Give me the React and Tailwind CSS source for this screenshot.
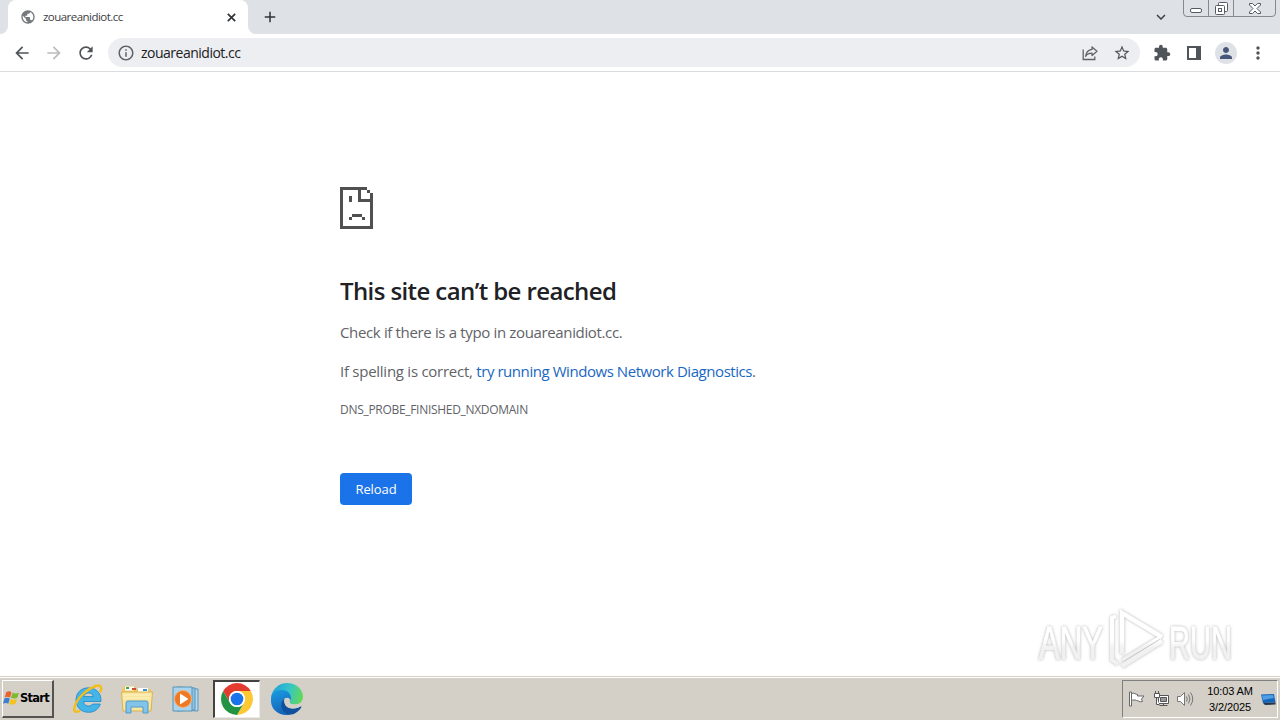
import React from 'react';
import {
  MdAdd,
  MdArrowBack,
  MdArrowForward,
  MdExpandMore,
  MdExtension,
  MdInfoOutline,
  MdMoreVert,
  MdPerson,
  MdPublic,
  MdRefresh,
  MdStarBorder,
} from 'react-icons/md';

const ShareIcon = () => (
  <svg className="w-4 h-4" viewBox="0 0 16 16" fill="none" stroke="#5f6368" strokeWidth="1.3">
    <path d="M1.2 4.5v10h11.6v-3" />
    <path d="M10 2l5 4.3-5 4.3V8.2C7 8.2 5 9 3.6 11.3c.4-3.5 2.6-6.3 6.4-6.9z" strokeLinejoin="round" />
  </svg>
);

const SidePanelIcon = () => (
  <svg className="w-[14px] h-[14px]" viewBox="0 0 14 14" fill="#50555a">
    <path fillRule="evenodd" d="M0 0h14v14H0zM2 2v10h7V2z" />
  </svg>
);

const CloseIcon = () => (
  <svg className="w-[9px] h-[9px]" viewBox="0 0 9 9" stroke="#303438" strokeWidth="1.7">
    <path d="M.8.8l7.400 7.400M8.200.8L.8 8.200" />
  </svg>
);

const WindowControls = () => (
  <div className="flex w-[93px] h-[18px] mr-1 -mt-px border border-[#85898f] rounded-b-[4px] overflow-hidden">
    <div className="w-[25px] flex items-center justify-center border-r border-[#85898f]">
      <svg className="w-3 h-[5px] mt-[4px]" viewBox="0 0 12 5">
        <rect x="0.5" y="0.5" width="11" height="4" rx="1.5" fill="#fff" stroke="#555b66" />
      </svg>
    </div>
    <div className="w-[25px] flex items-center justify-center border-r border-[#85898f]">
      <svg className="w-[13px] h-[13px] mt-px" viewBox="0 0 13 13" fill="#fff" stroke="#555b66">
        <rect x="3.5" y="0.5" width="9" height="9" rx="1" />
        <rect x="0.5" y="3.5" width="9" height="9" rx="1" />
        <rect x="3.5" y="6.5" width="3" height="3" />
      </svg>
    </div>
    <div className="flex-1 flex items-center justify-center">
      <svg className="w-3 h-[11px] mt-px" viewBox="0 0 12 11" fill="#fff" stroke="#555b66">
        <path d="M.5.5h3L6 3 8.5.5h3v1.5L8 5.5l3.5 3.5v1.5h-3L6 8l-2.5 2.5h-3V9L4 5.5.5 2z" />
      </svg>
    </div>
  </div>
);

const TabStrip = () => (
  <div className="flex h-[34px] bg-[#dee1e6]">
    {/* Rounded tail on the left of the active tab */}
    <div className="w-2 bg-white">
      <div className="w-2 h-[34px] bg-[#dee1e6] rounded-br-lg"></div>
    </div>
    <div className="flex items-center w-[240px] h-[34px] pl-3 pr-[12px] bg-white rounded-t-lg">
      <MdPublic className="w-4 h-4 text-[#75797d]" />
      <span className="ml-[7px] flex-1 text-[11.5px] tracking-[-0.54px] whitespace-nowrap text-[#3c4043]">
        zouareanidiot.cc
      </span>
      <CloseIcon />
    </div>
    <div className="w-2 bg-white">
      <div className="w-2 h-[34px] bg-[#dee1e6] rounded-bl-lg"></div>
    </div>
    <div className="flex flex-1 items-center pl-[5px]">
      <MdAdd className="w-[18px] h-[18px] text-[#303438]" />
    </div>
    <div className="flex items-center pr-[13px]">
      <MdExpandMore className="w-[18px] h-[18px] text-[#3c4043]" />
    </div>
    <WindowControls />
  </div>
);

const Toolbar = () => (
  <div className="flex items-center h-[38px] bg-white border-b border-[#dadce0] text-[#5f6368]">
    <div className="flex items-center gap-3 pl-3">
      <MdArrowBack className="w-5 h-5 text-[#505458]" />
      <MdArrowForward className="w-5 h-5 text-[#babcbe]" />
      <MdRefresh className="w-5 h-5 text-[#505458]" />
    </div>
    <div className="flex items-center w-[1032px] h-[29px] ml-3 pl-[9px] pr-[9px] rounded-full bg-[#eceef1]">
      <MdInfoOutline className="w-[18px] h-[18px]" />
      <span className="ml-[6px] flex-1 text-[14px] tracking-[-0.5px] text-[#202124]">zouareanidiot.cc</span>
      <ShareIcon />
      <MdStarBorder className="w-[18px] h-[18px] ml-[15px] text-[#505458]" />
    </div>
    <div className="flex flex-1 items-center pl-[13px]">
      <MdExtension className="w-[18px] h-[18px] mr-4 text-[#50555a]" />
      <SidePanelIcon />
      <div className="flex items-center justify-center w-[22px] h-[22px] ml-[14px] rounded-full bg-[#dee1e6]">
        <MdPerson className="w-[18px] h-[18px] text-[#47567a]" />
      </div>
      <MdMoreVert className="w-5 h-5 ml-[11px] text-[#50555a]" />
    </div>
  </div>
);

const SadPage = () => (
  <svg className="block w-[33px] h-[42px]" viewBox="0 0 33 42" fill="#505050" shapeRendering="crispEdges">
    <path d="M0 0h27v3H0zM0 0h3v42H0zM0 39h33v3H0zM30 6h3v36h-3zM27 3h3v3h-3zM18 0h3v15h-3zM18 12h15v3H18z" />
    <path d="M9 9h3v6H9zM12 27h10v3H12zM9 30h3v3H9zM22 30h3v3h-3z" />
  </svg>
);

const ErrorPage = () => (
  <main className="flex-1 pl-[340px] pt-[115px] bg-white text-[#5f6368]">
    <SadPage />
    <h1 className="mt-[46px] text-[24px] leading-[32px] font-semibold tracking-[-0.6px] text-[#202124]">
      This site can’t be reached
    </h1>
    <p className="mt-[13px] text-[15px] leading-[24px] tracking-[-0.35px]">Check if there is a typo in zouareanidiot.cc.</p>
    <p className="mt-[15px] text-[15px] leading-[24px] tracking-[-0.24px]">
      <span className="tracking-[-0.26px]">If spelling is correct, </span>
      <a className="text-[#1967c2] tracking-[-0.44px]">try running Windows Network Diagnostics</a>.
    </p>
    <div className="mt-[17px] text-[12px] leading-[20px] tracking-[-0.3px]">DNS_PROBE_FINISHED_NXDOMAIN</div>
    <button className="w-[72px] h-8 mt-[53px] pt-px rounded-[4px] bg-[#1a73e8] text-[13px] tracking-[-0.1px] text-white">Reload</button>
  </main>
);

const Watermark = () => (
  <div className="absolute left-[1030px] top-[600px] w-[220px] h-[78px] drop-shadow-[0_0_1.5px_rgba(0,0,0,0.3)]">
    <svg className="w-[220px] h-[78px] overflow-visible" viewBox="0 -4 220 78" fill="url(#mark-fill)">
      <defs>
        <linearGradient id="mark-fill" gradientUnits="userSpaceOnUse" x1="0" y1="20" x2="0" y2="60">
          <stop offset="0.4" stopColor="#fff" />
          <stop offset="0.6" stopColor="#f1f1f1" />
        </linearGradient>
      </defs>
      <g fontFamily="'Liberation Sans', sans-serif" fontSize="47" stroke="url(#mark-fill)" strokeWidth="1">
        <text x="9" y="55" textLength="64" lengthAdjust="spacingAndGlyphs">ANY</text>
        <text x="139" y="55" textLength="63" lengthAdjust="spacingAndGlyphs">RUN</text>
      </g>
      <g fill="none" stroke="url(#mark-fill)" strokeWidth="4.500">
        <path d="M92 50V9l40 24" />
        <path d="M132 37L92 62" />
        <path d="M130 33L92 56" strokeWidth="3" />
        <path d="M86 12l-4 2v42l6 4" strokeWidth="4" />
      </g>
    </svg>
  </div>
);

const WindowsLogo = () => (
  <svg className="w-[17px] h-[17px]" viewBox="0 0 16 16">
    <path d="M3 2c2-1 3.500-1 5 0L6.700 7c-2-1-3.500-.8-5 0z" fill="#e9622c" />
    <path d="M9 2.500c2 1 4 .8 6 0L13.500 7.300c-2 1-4 .8-6 0z" fill="#7eb92e" />
    <path d="M1.400 8c1.700-.8 3.300-.8 5 0L5 13c-1.600-1-3.200-1-5 0z" fill="#3c7fd0" />
    <path d="M7.300 8.500c2 .9 3.800.8 5.900 0L11.800 13c-2 1-4 1-5.800.2z" fill="#f6c21c" />
  </svg>
);

const InternetExplorerIcon = () => (
  <svg className="w-8 h-8" viewBox="0 0 32 32" fill="none">
    <path
      fillRule="evenodd"
      d="M29 18.500H11.500c.4 3 2.200 4.500 5 4.500 2 0 3.300-.7 4.200-2h7.600c-1.500 5-5.800 8.300-11.700 8.300C8.800 29.300 4 24 4 17S9 4.800 16.300 4.800C24 4.800 29.500 10 29 18.500zM11.700 13.600h9.600c-.5-2.300-2.100-3.600-4.700-3.600s-4.300 1.400-4.900 3.600z"
      fill="#45b4e6"
      stroke="#1c86c8"
      strokeWidth="0.8"
    />
    <path
      d="M28.500 8.500c2-4.500-.2-7-4.500-5.500C15 6 5 15 2.500 24c-1.200 4.500.8 6 4.800 4"
      stroke="#f4bd18"
      strokeWidth="2.400"
      strokeLinecap="round"
    />
  </svg>
);

const ExplorerIcon = () => (
  <svg className="w-8 h-8" viewBox="0 0 32 32">
    <path d="M1 6l1.500-3H14l1 3h15l1 21H1z" fill="#ecc968" />
    <path d="M4 3.500h9v4H4zM17 5h10v4H17z" fill="#fff" />
    <path d="M5 4h3v2H5z" fill="#3da558" />
    <path d="M11 5h4v2h-4z" fill="#c9502b" />
    <path d="M22 6h4v2h-4z" fill="#3d91c9" />
    <path d="M.5 9h31L30 28H2z" fill="#f8e6a0" stroke="#d9b34f" />
    <path d="M2 12h28M2 15h28" stroke="#fff3c4" />
    <path d="M5 30V19.500Q5 18 7 18h18q2 0 2 1.500V30h-5v-6H10v6z" fill="#83c4ea" stroke="#4e9bcb" />
  </svg>
);

const MediaPlayerIcon = () => (
  <svg className="w-[30px] h-[28px]" viewBox="0 0 30 28">
    <path d="M8 3l18 1v22l-18-1z" fill="#b7d9ed" stroke="#5894b8" />
    <path d="M5 2l18 1v22L5 26z" fill="#90c4e3" stroke="#5894b8" />
    <path d="M1 2h19v24H1z" fill="#a9d4ee" stroke="#5894b8" />
    <circle cx="11" cy="14" r="8.500" fill="#ee7924" stroke="#f7b071" />
    <path d="M8 8.500v11l8.500-5.500z" fill="#fff" />
  </svg>
);

const ChromeIcon = () => (
  <svg className="w-8 h-8" viewBox="0 0 48 48">
    <circle cx="24" cy="24" r="23.500" fill="#fff" />
    <path d="M24 12h20.780A24 24 0 0 0 3.220 12l10.390 18A12 12 0 0 1 24 12z" fill="#e33b2e" />
    <path d="M34.390 30L24 48a24 24 0 0 0 20.780-36H24a12 12 0 0 1 10.390 18z" fill="#fcc934" />
    <path d="M13.610 30L3.220 12A24 24 0 0 0 24 48l10.390-18a12 12 0 0 1-20.780 0z" fill="#229342" />
    <circle cx="24" cy="24" r="12" fill="#fff" />
    <circle cx="24" cy="24" r="9.500" fill="#1a73e8" />
  </svg>
);

const EdgeIcon = () => (
  <svg className="w-8 h-8" viewBox="0 0 32 32">
    <defs>
      <linearGradient id="edge-top" x1="0" y1="0.3" x2="1" y2="0.5">
        <stop offset="0" stopColor="#229fd9" />
        <stop offset="0.55" stopColor="#35c4c9" />
        <stop offset="1" stopColor="#62d957" />
      </linearGradient>
      <linearGradient id="edge-left" x1="0" y1="0" x2="0.3" y2="1">
        <stop offset="0" stopColor="#1b9de2" />
        <stop offset="1" stopColor="#1465ba" />
      </linearGradient>
    </defs>
    <path d="M0 15C1 6 8 0 16 0c9 0 16 6 16 13.500 0 5-3.500 8-8 8-4 0-5.500-1-5.500-2.500 0-1 1.500-1.500 1.500-4C19.500 10 15 8 11 8 6 8 2 11 0 15z" fill="url(#edge-top)" />
    <path d="M0 16C0 10 5 7 10.500 7c5.500 0 9.500 3.500 9.500 8 0 1-.4 2-1 3-.5-2.500-3-4-5.500-2.500C10.500 19 14 29 20 31.500 9 34-1 27 0 16z" fill="url(#edge-left)" />
    <path d="M13.500 15.500c-1.500 5 2 10 8.500 10 3 0 5.500-1 7.500-2 .8-.4 1.200.2.700.9C27 29.500 22 32 17.500 31.500 9.500 29 8 20 13.500 15.500z" fill="#10519d" />
    <path d="M14 15.500c2-1.500 4.500-.8 5 1.500-.7 1-.8 2.500.5 3.500 1.500 1 6 1.500 9 0l1.500 2.500c-3 2-6 2.500-8.500 2.500-6 0-9.500-5-7.500-10z" fill="#d4d0c8" />
  </svg>
);

const FlagIcon = () => (
  <svg className="w-4 h-4" viewBox="0 0 16 16" fill="#fff" stroke="#66666a">
    <path d="M.5 1h2v14h-2z" />
    <path d="M2.500 2.500c3-1 4 1 6 1V5h6.500l-2.500 3 1 2.500c-3 1-4-1-6-1-2-1-3-.5-5 0z" />
  </svg>
);

const NetworkIcon = () => (
  <svg className="w-[17px] h-4" viewBox="0 0 17 16" fill="#fff" stroke="#55555a">
    <path d="M5.500 4.500h10v8h-10z" />
    <path d="M7.500 6.500h6v4h-6z" fill="#999" />
    <path d="M10.500 13v1M6.500 14.500h8" />
    <path d="M1.500 2.500h5v4h-5zM2.500 0v2M5.500 0v2M3.500 7v6.500h3" />
  </svg>
);

const VolumeIcon = () => (
  <svg className="w-[17px] h-4" viewBox="0 0 17 16" fill="none" stroke="#77777a">
    <path d="M.5 5.500h3l4-4v13l-4-4h-3z" fill="#fff" />
    <path d="M9.500 5.500q1.500 2.500 0 5M11.500 3.500q3 4.500 0 9M13.500 1.500q4.500 6.500 0 13" />
  </svg>
);

const DesktopIcon = () => (
  <svg className="w-4 h-[14px]" viewBox="0 0 16 14">
    <path d="M0 2.500l13-.5 1.500 8.500L2 11z" fill="#1765b8" />
    <path d="M1 3.500l11-.5 1 3-11 2z" fill="#4f9ee6" />
    <path d="M2 11l12.500-.5v2L4 13z" fill="#26354a" />
  </svg>
);

const Taskbar = () => (
  <footer className="h-[44px] bg-[#d4d0c8] border-t border-[#d4d0c8]">
    <div className="flex items-center h-[43px] pl-[2px] pr-[2px] border-t border-white">
      <button className="flex items-center w-[52px] h-[38px] border-t border-l border-r-2 border-b-2 border-t-white border-l-white border-r-[#55534f] border-b-[#55534f]">
        <WindowsLogo />
        <span className="font-['DejaVu_Sans',sans-serif] font-bold text-[11.5px] tracking-[-0.75px] text-black">Start</span>
      </button>
      <div className="flex flex-1 items-center pl-[18px]">
        <InternetExplorerIcon />
        <div className="ml-[17px]"><ExplorerIcon /></div>
        <div className="ml-[19px]"><MediaPlayerIcon /></div>
        <div className="flex items-center justify-center w-[47px] h-[38px] ml-[11px] pb-px pr-px bg-white border-t-2 border-l-2 border-r border-b border-t-[#45433f] border-l-[#45433f] border-r-[#eceae6] border-b-[#eceae6]">
          <ChromeIcon />
        </div>
        <div className="ml-[11px]"><EdgeIcon /></div>
      </div>
      {/* Notification area */}
      <div className="flex items-center w-[156px] h-[38px] pl-[6px] border border-t-[#808080] border-l-[#808080] border-r-white border-b-white">
        <FlagIcon />
        <div className="ml-[8px]"><NetworkIcon /></div>
        <div className="ml-[7px]"><VolumeIcon /></div>
        <div className="w-[60px] ml-[6px] text-center font-['Liberation_Sans',sans-serif] text-[11px] leading-[16px] tracking-[-0.1px] whitespace-nowrap text-black">
          <div>10:03 AM</div>
          <div>3/2/2025</div>
        </div>
        <div className="ml-px"><DesktopIcon /></div>
      </div>
    </div>
  </footer>
);

const App = () => {
  return (
    <div className="relative flex flex-col w-[1280px] h-[720px] overflow-hidden bg-white font-['Open_Sans','Noto_Sans',sans-serif]">
      <TabStrip />
      <Toolbar />
      <ErrorPage />
      <Taskbar />
      <Watermark />
    </div>
  );
};

export default App;
